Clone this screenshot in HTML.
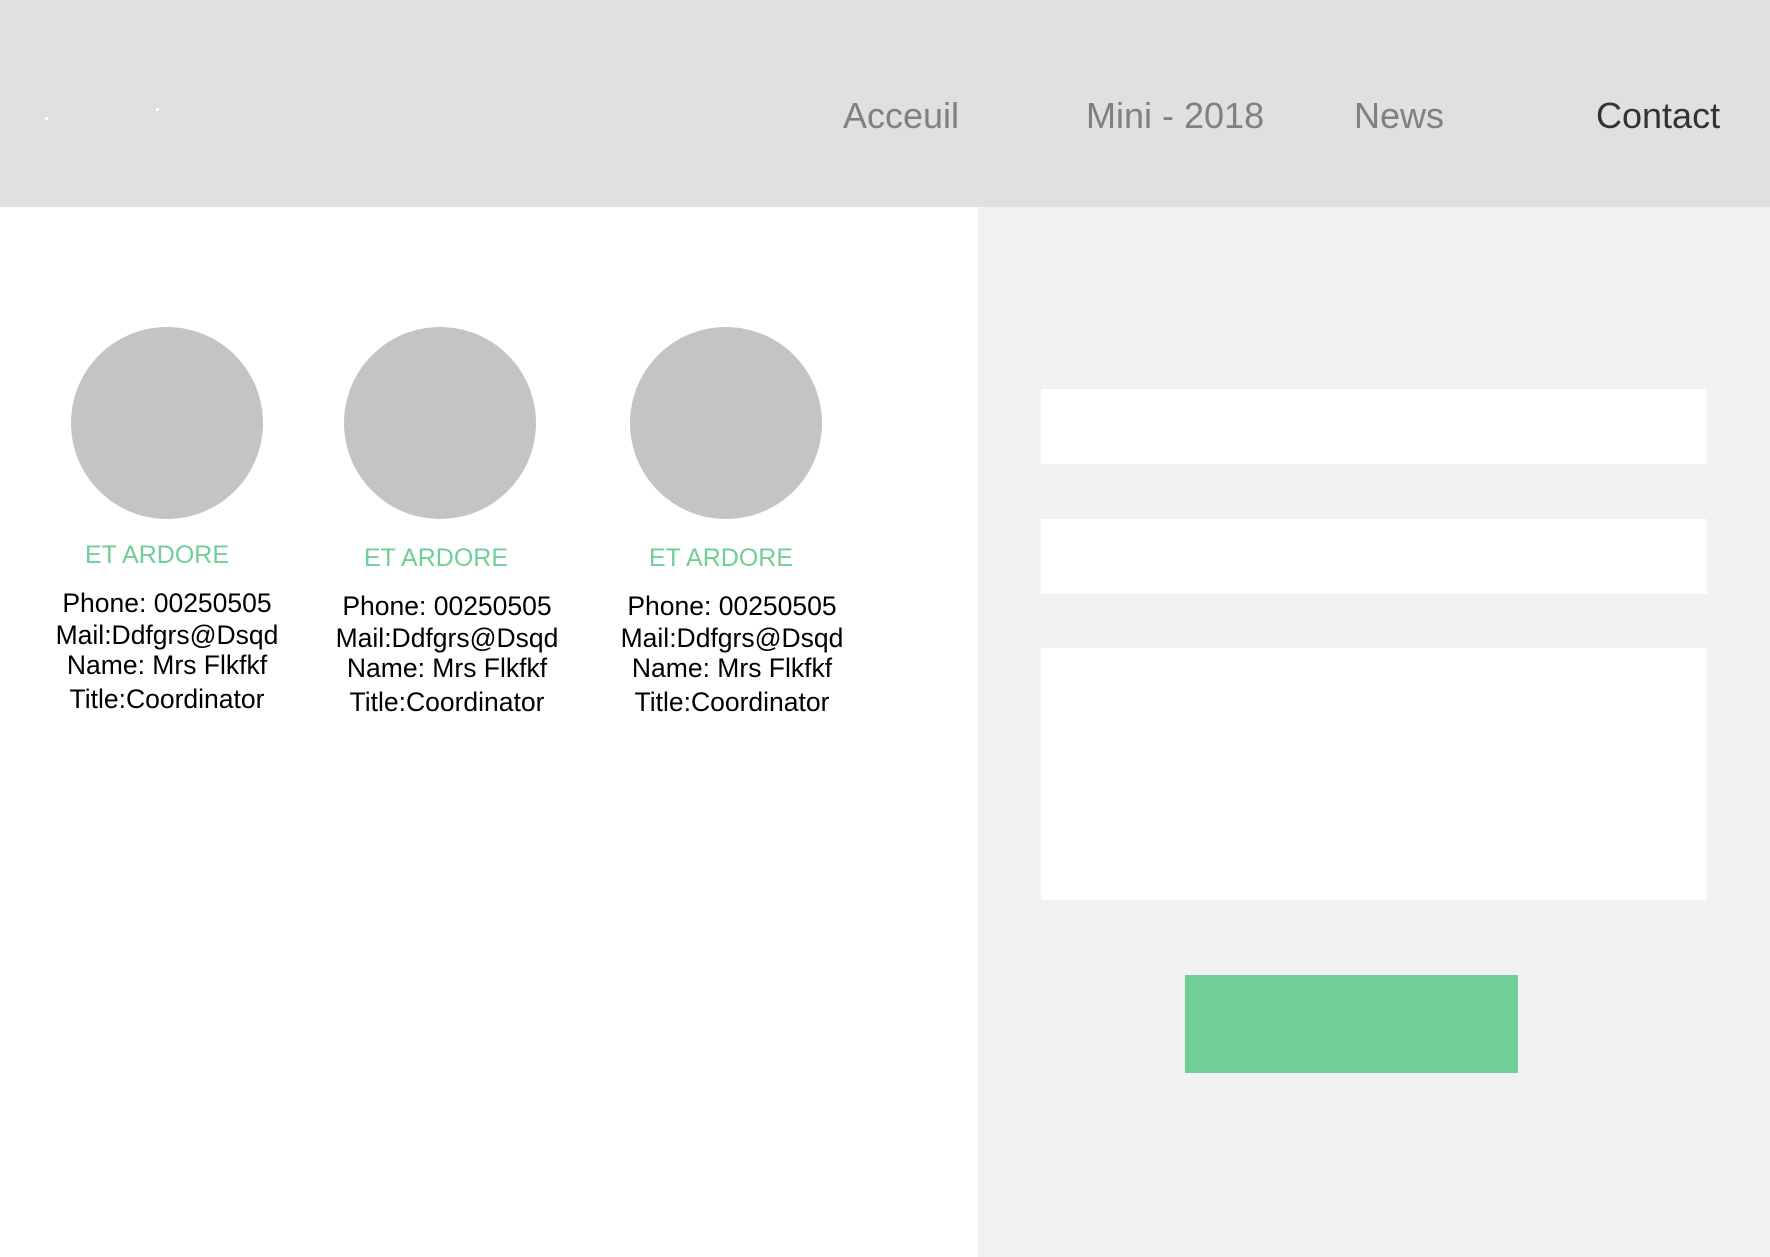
<!DOCTYPE html>
<html><head><meta charset="utf-8"><style>
*{margin:0;padding:0;box-sizing:border-box}
body{width:1770px;height:1257px;position:relative;background:#fff;font-family:"Liberation Sans",sans-serif;overflow:hidden}
.hdr{position:absolute;left:0;top:0;width:1770px;height:207px;background:#e0e0e0}
.dot{position:absolute;width:3px;height:3px;background:#fff}
.nav{position:absolute;top:96px;font-size:36px;line-height:40px;color:#808080;white-space:nowrap}
.panel{position:absolute;left:978px;top:207px;width:792px;height:1050px;background:#f2f2f2}
.in{position:absolute;left:1041px;width:666px;background:#fff}
.btn{position:absolute;left:1185px;top:975px;width:333px;height:98px;background:#70cf97}
.c{position:absolute;width:192px;height:192px;border-radius:50%;background:#c4c4c4;top:327px}
.t{position:absolute;width:300px;text-align:center;color:#6fcf97;font-size:25px;line-height:30px}
.d{position:absolute;width:300px;text-align:center;color:#000;font-size:26.5px;line-height:32px;top:587px}
</style></head><body>
<div class="hdr">
<div class="dot" style="left:45px;top:117px"></div>
<div class="dot" style="left:156px;top:108px"></div>
<div class="nav" style="left:843px">Acceuil</div>
<div class="nav" style="left:1086px">Mini - 2018</div>
<div class="nav" style="left:1354px">News</div>
<div class="nav" style="left:1596px;color:#333">Contact</div>
</div>
<div class="panel"></div>
<div class="in" style="top:389px;height:75px"></div>
<div class="in" style="top:519px;height:75px"></div>
<div class="in" style="top:648px;height:252px"></div>
<div class="btn"></div>

<div class="c" style="left:71px"></div>
<div class="c" style="left:344px"></div>
<div class="c" style="left:630px"></div>

<div class="t" style="left:7px;top:540px">ET ARDORE</div>
<div class="t" style="left:286px;top:543px">ET ARDORE</div>
<div class="t" style="left:571px;top:543px">ET ARDORE</div>

<div class="d" style="left:17px;top:587px">Phone: 00250505<br>Mail:Ddfgrs@Dsqd<br><span style="position:relative;top:-2px">Name: Mrs Flkfkf</span><br>Title:Coordinator</div>
<div class="d" style="left:297px;top:590px">Phone: 00250505<br>Mail:Ddfgrs@Dsqd<br><span style="position:relative;top:-2px">Name: Mrs Flkfkf</span><br>Title:Coordinator</div>
<div class="d" style="left:582px;top:590px">Phone: 00250505<br>Mail:Ddfgrs@Dsqd<br><span style="position:relative;top:-2px">Name: Mrs Flkfkf</span><br>Title:Coordinator</div>
</body></html>
